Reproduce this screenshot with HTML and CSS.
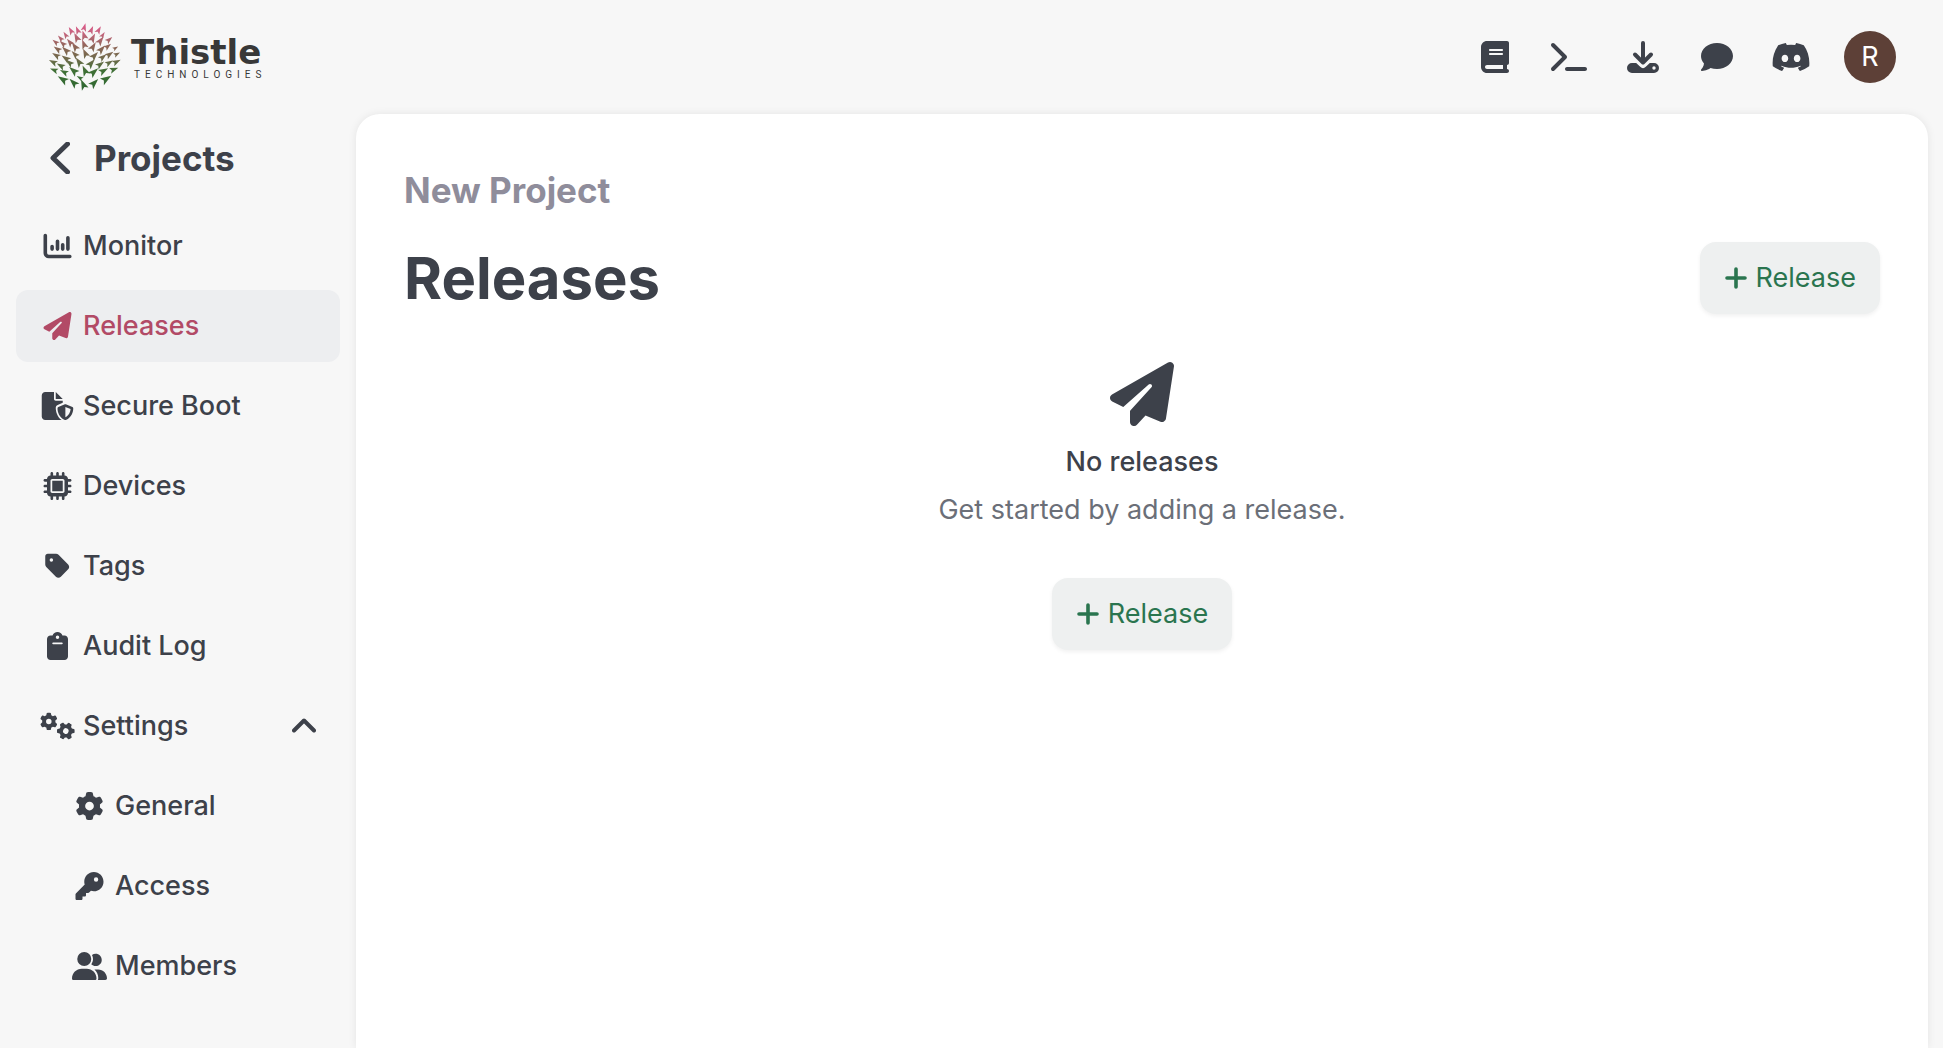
FILE: index.html
```html
<!DOCTYPE html>
<html lang="en">
  <head>
    <meta charset="UTF-8" />
    <meta name="viewport" content="width=device-width, initial-scale=1.0" />
    <title>Releases - Thistle</title>
    <link rel="stylesheet" href="styles.css">
  </head>
  <body>
    <!-- Shared icons -->
    <svg class="icon-defs" aria-hidden="true">
      <symbol id="icon-plane" viewBox="0 0 512 512">
        <path d="M498.1 5.6c10.1 7 15.4 19.1 13.5 31.2l-64 416c-1.5 9.7-7.4 18.2-16 23s-18.9 5.4-28 1.6L284 427.7l-68.5 74.1c-8.9 9.7-22.9 12.9-35.2 8.1S160 493.2 160 480V396.4c0-4 1.5-7.8 4.2-10.7L331.8 202.8c5.8-6.3 5.6-16-.4-22s-15.7-6.4-22-.7L106 360.8 17.7 316.6C7.1 311.3 .3 300.7 0 288.9s5.9-22.8 16.1-28.7l448-256c10.7-6.1 23.9-5.5 34 1.4z" />
      </symbol>
      <symbol id="icon-gear" viewBox="0 0 512 512">
        <path d="M495.9 166.6c3.2 8.7 .5 18.4-6.4 24.6l-43.3 39.4c1.1 8.3 1.7 16.8 1.7 25.4s-.6 17.1-1.7 25.4l43.3 39.4c6.9 6.2 9.6 15.9 6.4 24.6c-4.4 11.9-9.7 23.3-15.8 34.3l-4.7 8.1c-6.6 11-14 21.4-22.1 31.2c-5.9 7.2-15.7 9.6-24.5 6.8l-55.7-17.7c-13.4 10.3-28.2 18.9-44 25.4l-12.5 57.1c-2 9.1-9 16.3-18.2 17.8c-13.8 2.3-28 3.5-42.5 3.5s-28.7-1.2-42.5-3.5c-9.2-1.5-16.2-8.7-18.2-17.8l-12.5-57.1c-15.8-6.5-30.6-15.1-44-25.4L83.1 425.9c-8.8 2.8-18.6 .3-24.5-6.8c-8.1-9.8-15.5-20.2-22.1-31.2l-4.7-8.1c-6.1-11-11.4-22.4-15.8-34.3c-3.2-8.7-.5-18.4 6.4-24.6l43.3-39.4C64.6 273.1 64 264.6 64 256s.6-17.1 1.7-25.4L22.4 191.2c-6.9-6.2-9.6-15.9-6.4-24.6c4.4-11.9 9.7-23.3 15.8-34.3l4.7-8.1c6.6-11 14-21.4 22.1-31.2c5.9-7.2 15.7-9.6 24.5-6.8l55.7 17.7c13.4-10.3 28.2-18.9 44-25.4l12.5-57.1c2-9.1 9-16.3 18.2-17.8C227.3 1.2 241.5 0 256 0s28.7 1.2 42.5 3.5c9.2 1.5 16.2 8.7 18.2 17.8l12.5 57.1c15.8 6.5 30.6 15.1 44 25.4l55.7-17.7c8.8-2.8 18.6-.3 24.5 6.8c8.1 9.8 15.5 20.2 22.1 31.2l4.7 8.1c6.1 11 11.4 22.4 15.8 34.3zM256 336a80 80 0 1 0 0-160 80 80 0 1 0 0 160z" />
      </symbol>
      <symbol id="icon-plus" viewBox="0 0 24 24">
        <path d="M12 3v18M3 12h18" fill="none" stroke="currentColor" stroke-width="3.6" stroke-linecap="round" />
      </symbol>
    </svg>

    <header class="topbar">
      <a href="#" class="logo">
        <svg class="logo-mark" viewBox="50 35 222 210" aria-hidden="true">
          <defs>
            <linearGradient id="thistle-fill" x1="0" y1="0" x2="0" y2="1">
              <stop offset="0" stop-color="#e0538b" />
              <stop offset="0.15" stop-color="#c8647f" />
              <stop offset="0.35" stop-color="#8f6658" />
              <stop offset="0.55" stop-color="#6b6b49" />
              <stop offset="0.7" stop-color="#3f7036" />
              <stop offset="1" stop-color="#2c6630" />
            </linearGradient>
            <path id="dart-l" d="M-4-16 13 9 2 6-6 15z" />
            <path id="dart-r" d="M4-16-13 9-2 6 6 15z" />
            <clipPath id="thistle-darts">
              <use href="#dart-r" transform="translate(162 52) scale(.85)" />
              <use href="#dart-l" transform="translate(142 61) rotate(-8) scale(.85)" />
              <use href="#dart-l" transform="translate(122 62) rotate(-14) scale(.85)" />
              <use href="#dart-l" transform="translate(106 75) rotate(-18) scale(.75)" />
              <use href="#dart-l" transform="translate(91 85) rotate(-28) scale(.75)" />
              <use href="#dart-l" transform="translate(76 96) rotate(-36) scale(.75)" />
              <use href="#dart-r" transform="translate(183 60) rotate(8) scale(.85)" />
              <use href="#dart-r" transform="translate(205 60) rotate(14) scale(.85)" />
              <use href="#dart-r" transform="translate(217 75) rotate(18) scale(.7)" />
              <use href="#dart-r" transform="translate(236 89) rotate(34) scale(.8)" />
              <use href="#dart-r" transform="translate(255 114) rotate(44) scale(.6)" />

              <use href="#dart-l" transform="translate(161 76) rotate(-2)" />
              <use href="#dart-l" transform="translate(139 83) rotate(-12)" />
              <use href="#dart-l" transform="translate(119 97) rotate(-24) scale(.9)" />
              <use href="#dart-l" transform="translate(98 101) rotate(-34) scale(.8)" />
              <use href="#dart-l" transform="translate(82 117) rotate(-40) scale(.9)" />
              <use href="#dart-r" transform="translate(187 84) rotate(12)" />
              <use href="#dart-r" transform="translate(210 92) rotate(22)" />
              <use href="#dart-r" transform="translate(232 109) rotate(36) scale(.8)" />

              <use href="#dart-l" transform="translate(161 103) rotate(-6)" />
              <use href="#dart-l" transform="translate(134 110) rotate(-20)" />
              <use href="#dart-l" transform="translate(107 121) rotate(-32)" />
              <use href="#dart-l" transform="translate(78 136) rotate(-44) scale(.9)" />
              <use href="#dart-r" transform="translate(188 110) rotate(16)" />
              <use href="#dart-r" transform="translate(213 118) rotate(28)" />
              <use href="#dart-r" transform="translate(237 133) rotate(40) scale(.9)" />
              <use href="#dart-r" transform="translate(259 132) rotate(46) scale(.7)" />

              <use href="#dart-l" transform="translate(165 130) rotate(-10)" />
              <use href="#dart-l" transform="translate(134 133) rotate(-30) scale(.9)" />
              <use href="#dart-l" transform="translate(107 145) rotate(-40)" />
              <use href="#dart-l" transform="translate(69 156) rotate(-48) scale(.9)" />
              <use href="#dart-r" transform="translate(192 137) rotate(28)" />
              <use href="#dart-r" transform="translate(217 141) rotate(36) scale(.9)" />
              <use href="#dart-r" transform="translate(258 155) rotate(48) scale(.9)" />

              <use href="#dart-l" transform="translate(146 156) rotate(-20) scale(1.05)" />
              <use href="#dart-l" transform="translate(118 158) rotate(-34) scale(.9)" />
              <use href="#dart-l" transform="translate(92 167) rotate(-46) scale(.9)" />
              <use href="#dart-r" transform="translate(182 160) rotate(26) scale(1.05)" />
              <use href="#dart-r" transform="translate(209 163) rotate(38) scale(.95)" />
              <use href="#dart-r" transform="translate(236 158) rotate(44) scale(.85)" />

              <use href="#dart-l" transform="translate(164 182) rotate(-10) scale(1.1)" />
              <use href="#dart-l" transform="translate(130 182) rotate(-34) scale(1.1)" />
              <use href="#dart-l" transform="translate(102 186) rotate(-48) scale(.9)" />
              <use href="#dart-l" transform="translate(72 180) rotate(-54) scale(.85)" />
              <use href="#dart-r" transform="translate(190 186) rotate(34) scale(1.1)" />
              <use href="#dart-r" transform="translate(219 182) rotate(46)" />
              <use href="#dart-r" transform="translate(250 178) rotate(54) scale(.9)" />

              <use href="#dart-l" transform="translate(98 208) rotate(-42) scale(1.15)" />
              <use href="#dart-l" transform="translate(130 218) rotate(-30) scale(1.1)" />
              <use href="#dart-l" transform="translate(159 224) rotate(-8) scale(1.1)" />
              <use href="#dart-l" transform="translate(149 203) rotate(-44) scale(.7)" />
              <use href="#dart-r" transform="translate(191 219) rotate(30) scale(1.1)" />
              <use href="#dart-r" transform="translate(227 207) rotate(42) scale(1.15)" />
            </clipPath>
          </defs>
          <rect x="50" y="35" width="222" height="210" fill="url(#thistle-fill)" clip-path="url(#thistle-darts)" />
        </svg>
        <span class="logo-text">
          <span class="logo-name">Thistle</span>
          <span class="logo-sub">TECHNOLOGIES</span>
        </span>
      </a>

      <nav class="toolbar" aria-label="Resources">
        <a href="#" class="tool" aria-label="Documentation">
          <svg viewBox="0 0 448 512"><path d="M96 0C43 0 0 43 0 96V416c0 53 43 96 96 96H384h32c17.7 0 32-14.3 32-32s-14.3-32-32-32V384c17.7 0 32-14.3 32-32V32c0-17.7-14.3-32-32-32H384 96zm0 384H352v64H96c-17.7 0-32-14.3-32-32s14.3-32 32-32zm32-240c0-8.8 7.2-16 16-16H336c8.8 0 16 7.2 16 16s-7.2 16-16 16H144c-8.8 0-16-7.2-16-16zm16 48H336c8.8 0 16 7.2 16 16s-7.2 16-16 16H144c-8.8 0-16-7.2-16-16s7.2-16 16-16z" /></svg>
        </a>
        <a href="#" class="tool" aria-label="Terminal">
          <svg viewBox="0 0 576 512"><path d="M9.4 86.6C-3.1 74.1-3.1 53.9 9.4 41.4s32.8-12.5 45.3 0l192 192c12.5 12.5 12.5 32.8 0 45.3l-192 192c-12.5 12.5-32.8 12.5-45.3 0s-12.5-32.8 0-45.3L178.7 256 9.4 86.6zM256 416H544c17.7 0 32 14.3 32 32s-14.3 32-32 32H256c-17.7 0-32-14.3-32-32s14.3-32 32-32z" /></svg>
        </a>
        <a href="#" class="tool" aria-label="Downloads">
          <svg viewBox="0 0 32 32">
            <path d="M16 2v19M8 13.5l8 8 8-8" fill="none" stroke="currentColor" stroke-width="4" stroke-linecap="round" stroke-linejoin="round" />
            <path fill-rule="evenodd" d="M5 22h4.2l4 3.8a4 4 0 0 0 5.6 0l4-3.8H27a5 5 0 0 1 0 10H5a5 5 0 0 1 0-10zm22 3.3a1.7 1.7 0 1 0 0 3.4 1.7 1.7 0 0 0 0-3.4z" />
          </svg>
        </a>
        <a href="#" class="tool" aria-label="Support chat">
          <svg viewBox="0 0 512 512"><path d="M512 240c0 114.9-114.6 208-256 208c-37.1 0-72.3-6.4-104.1-17.9c-11.9 8.7-31.3 20.6-54.3 30.6C73.6 471.1 44.7 480 16 480c-6.5 0-12.3-3.9-14.8-9.9c-2.5-6-1.1-12.8 3.4-17.4l.3-.3c.3-.3 .7-.7 1.3-1.4c1.1-1.2 2.8-3.1 4.9-5.7c4.1-5 9.6-12.4 15.2-21.6c10-16.6 19.5-38.4 21.4-62.9C17.7 326.8 0 285.1 0 240C0 125.1 114.6 32 256 32s256 93.1 256 208z" /></svg>
        </a>
        <a href="#" class="tool" aria-label="Discord">
          <svg viewBox="0 0 640 512"><path d="M524.531,69.836a1.5,1.5,0,0,0-.764-.7A485.065,485.065,0,0,0,404.081,32.03a1.816,1.816,0,0,0-1.923.91,337.461,337.461,0,0,0-14.9,30.6,447.848,447.848,0,0,0-134.426,0,309.541,309.541,0,0,0-15.135-30.6,1.89,1.89,0,0,0-1.924-.91A483.689,483.689,0,0,0,116.085,69.137a1.712,1.712,0,0,0-.788.676C39.068,183.651,18.186,294.69,28.43,404.354a2.016,2.016,0,0,0,.765,1.375A487.666,487.666,0,0,0,176.02,479.918a1.9,1.9,0,0,0,2.063-.676A348.2,348.2,0,0,0,208.12,430.4a1.86,1.86,0,0,0-1.019-2.588,321.173,321.173,0,0,1-45.868-21.853,1.885,1.885,0,0,1-.185-3.126c3.082-2.309,6.166-4.711,9.109-7.137a1.819,1.819,0,0,1,1.9-.256c96.229,43.917,200.41,43.917,295.5,0a1.812,1.812,0,0,1,1.924.233c2.944,2.426,6.027,4.851,9.132,7.16a1.884,1.884,0,0,1-.162,3.126,301.407,301.407,0,0,1-45.89,21.83,1.875,1.875,0,0,0-1,2.611,391.055,391.055,0,0,0,30.014,48.815,1.864,1.864,0,0,0,2.063.7A486.048,486.048,0,0,0,610.7,405.729a1.882,1.882,0,0,0,.765-1.352C623.729,277.594,590.933,167.465,524.531,69.836ZM222.491,337.58c-28.972,0-52.844-26.587-52.844-59.239S193.056,219.1,222.491,219.1c29.665,0,53.306,26.82,52.843,59.239C275.334,310.993,251.924,337.58,222.491,337.58Zm195.38,0c-28.971,0-52.843-26.587-52.843-59.239S388.437,219.1,417.871,219.1c29.667,0,53.307,26.82,52.844,59.239C470.715,310.993,447.538,337.58,417.871,337.58Z" /></svg>
        </a>
        <button type="button" class="avatar">R</button>
      </nav>
    </header>

    <div class="layout">
      <aside class="sidebar">
        <a href="#" class="back-link">
          <svg class="back-icon" viewBox="0 0 20 32" aria-hidden="true"><path d="M17.5 2 3 16l14.5 14" /></svg>
          Projects
        </a>

        <nav class="menu" aria-label="Project">
          <a href="#" class="menu-item">
            <svg class="menu-icon" viewBox="0 0 28 28"><path d="M1.8 3.5V21a3.5 3.5 0 0 0 3.5 3.5h21M8.6 14.5v2.6M14 9.3v7.8M19.2 12.8v4.3M24.4 5.8v11.3" fill="none" stroke="currentColor" stroke-width="3.6" stroke-linecap="round" /></svg>
            Monitor
          </a>
          <a href="#" class="menu-item active" aria-current="page">
            <svg class="menu-icon"><use href="#icon-plane" /></svg>
            Releases
          </a>
          <a href="#" class="menu-item">
            <svg class="menu-icon" viewBox="0 0 576 512"><path d="M0 64C0 28.7 28.7 0 64 0H224V128c0 17.7 14.3 32 32 32H384v38.6l-92.9 37.2c-21.2 8.5-35.1 29-35.1 51.8c0 57.8 20.5 166 108 224.4H64c-35.3 0-64-28.7-64-64V64zm384 64H256V0L384 128zm39.1 97.7c5.7-2.3 12.1-2.3 17.8 0l120 48C570 277.4 576 286.2 576 296c0 63.3-25.9 168.8-134.8 214.2c-5.9 2.5-12.6 2.5-18.5 0C313.9 464.8 288 359.3 288 296c0-9.8 6-18.6 15.1-22.3l120-48zM527.4 312L432 273.8V461.7c68.2-33 91.5-99 95.4-149.7z" /></svg>
            Secure Boot
          </a>
          <a href="#" class="menu-item">
            <svg class="menu-icon" viewBox="0 0 512 512"><path d="M176 24c0-13.3-10.7-24-24-24s-24 10.7-24 24V64c-35.3 0-64 28.7-64 64H24c-13.3 0-24 10.7-24 24s10.7 24 24 24H64v56H24c-13.3 0-24 10.7-24 24s10.7 24 24 24H64v56H24c-13.3 0-24 10.7-24 24s10.7 24 24 24H64c0 35.3 28.7 64 64 64v40c0 13.3 10.7 24 24 24s24-10.7 24-24V448h56v40c0 13.3 10.7 24 24 24s24-10.7 24-24V448h56v40c0 13.3 10.7 24 24 24s24-10.7 24-24V448c35.3 0 64-28.7 64-64h40c13.3 0 24-10.7 24-24s-10.7-24-24-24H448V280h40c13.3 0 24-10.7 24-24s-10.7-24-24-24H448V176h40c13.3 0 24-10.7 24-24s-10.7-24-24-24H448c0-35.3-28.7-64-64-64V24c0-13.3-10.7-24-24-24s-24 10.7-24 24V64H280V24c0-13.3-10.7-24-24-24s-24 10.7-24 24V64H176V24zM160 128H352c17.7 0 32 14.3 32 32V352c0 17.7-14.3 32-32 32H160c-17.7 0-32-14.3-32-32V160c0-17.7 14.3-32 32-32zm192 32H160V352H352V160z" /></svg>
            Devices
          </a>
          <a href="#" class="menu-item">
            <svg class="menu-icon" viewBox="0 0 448 512"><path d="M0 80V229.5c0 17 6.7 33.3 18.7 45.3l176 176c25 25 65.5 25 90.5 0L418.7 317.3c25-25 25-65.5 0-90.5l-176-176c-12-12-28.3-18.7-45.3-18.7H48C21.5 32 0 53.5 0 80zm112 32a32 32 0 1 1 0 64 32 32 0 1 1 0-64z" /></svg>
            Tags
          </a>
          <a href="#" class="menu-item">
            <svg class="menu-icon" viewBox="0 0 384 512"><path d="M192 0c-41.8 0-77.4 26.7-90.5 64H64C28.7 64 0 92.7 0 128V448c0 35.3 28.7 64 64 64H320c35.3 0 64-28.7 64-64V128c0-35.3-28.7-64-64-64H282.5C269.4 26.7 233.8 0 192 0zm0 64a32 32 0 1 1 0 64 32 32 0 1 1 0-64zM112 192H272c8.8 0 16 7.2 16 16s-7.2 16-16 16H112c-8.8 0-16-7.2-16-16s7.2-16 16-16z" /></svg>
            Audit Log
          </a>
          <button type="button" class="menu-item" aria-expanded="true">
            <svg class="menu-icon" viewBox="0 0 35 28">
              <use href="#icon-gear" x="0" y="0.6" width="17.6" height="17.6" />
              <use href="#icon-gear" x="17" y="10.2" width="17.6" height="17.6" transform="rotate(30 25.8 19)" />
            </svg>
            Settings
            <svg class="menu-chevron" viewBox="0 0 24 16"><path d="M2 12.5 12 2.5l10 10" /></svg>
          </button>
          <div class="submenu">
            <a href="#" class="menu-item">
              <svg class="menu-icon"><use href="#icon-gear" /></svg>
              General
            </a>
            <a href="#" class="menu-item">
              <svg class="menu-icon" viewBox="0 0 512 512"><path d="M336 352c97.2 0 176-78.8 176-176S433.2 0 336 0S160 78.8 160 176c0 18.7 2.9 36.8 8.3 53.7L7 391c-4.5 4.5-7 10.6-7 17v80c0 13.3 10.7 24 24 24h80c13.3 0 24-10.7 24-24V448h40c13.3 0 24-10.7 24-24V384h40c6.4 0 12.5-2.5 17-7l33.3-33.3c16.9 5.4 35 8.3 53.7 8.3zM376 96a40 40 0 1 1 0 80 40 40 0 1 1 0-80z" /></svg>
              Access
            </a>
            <a href="#" class="menu-item">
              <svg class="menu-icon" viewBox="0 0 640 512"><path d="M96 128a128 128 0 1 1 256 0A128 128 0 1 1 96 128zM0 482.3C0 383.8 79.8 304 178.3 304h91.4C368.2 304 448 383.8 448 482.3c0 16.4-13.3 29.7-29.7 29.7H29.7C13.3 512 0 498.7 0 482.3zM609.3 512H471.4c5.4-9.4 8.6-20.3 8.6-32v-8c0-60.7-27.1-115.2-69.8-151.8c2.4-.1 4.7-.2 7.1-.2h61.4C567.8 320 640 392.2 640 481.3c0 17-13.8 30.7-30.7 30.7zM432 256c-31 0-59-12.6-79.3-32.9C372.4 196.5 384 163.6 384 128c0-26.8-6.6-52.1-18.3-74.3C384.3 40.1 407.2 32 432 32c61.9 0 112 50.1 112 112s-50.1 112-112 112z" /></svg>
              Members
            </a>
          </div>
        </nav>
      </aside>

      <main class="content">
        <p class="project-name">New Project</p>
        <div class="page-header">
          <h1>Releases</h1>
          <button type="button" class="btn">
            <svg class="btn-icon"><use href="#icon-plus" /></svg>
            Release
          </button>
        </div>

        <section class="empty">
          <svg class="empty-icon"><use href="#icon-plane" /></svg>
          <h2>No releases</h2>
          <p>Get started by adding a release.</p>
          <button type="button" class="btn">
            <svg class="btn-icon"><use href="#icon-plus" /></svg>
            Release
          </button>
        </section>
      </main>
    </div>
  </body>
</html>
```

FILE: styles.css
```css
* {
  margin: 0;
  padding: 0;
  box-sizing: border-box;
}

body {
  display: flex;
  flex-direction: column;
  min-height: 100vh;
  background-color: #f7f7f7;
  color: #3d414a;
  font-family: Inter, "Open Sans", sans-serif;
  font-size: 27px;
  line-height: 40px;
}

a {
  color: inherit;
  text-decoration: none;
}

button {
  border: none;
  background: none;
  color: inherit;
  font: inherit;
  cursor: pointer;
}

svg {
  fill: currentColor;
  flex-shrink: 0;
}

.icon-defs {
  display: none;
}

/* Top bar */
.topbar {
  display: flex;
  align-items: center;
  justify-content: space-between;
  height: 114px;
  padding: 0 47px;
}

.logo {
  display: flex;
  align-items: center;
  gap: 10px;
  color: #383838;
}

.logo-mark {
  width: 74px;
  height: 70px;
}

.logo-text {
  display: flex;
  flex-direction: column;
}

.logo-name {
  font-family: "DejaVu Sans", sans-serif;
  font-size: 34px;
  font-weight: 700;
  line-height: 36px;
}

.logo-sub {
  padding-left: 3px;
  font-family: "Liberation Sans Narrow", Roboto, sans-serif;
  font-size: 10px;
  line-height: 10px;
  letter-spacing: 5px;
}

.toolbar {
  display: flex;
  align-items: center;
  gap: 32px;
}

.tool {
  display: flex;
  justify-content: center;
  width: 42px;
}

.tool svg {
  height: 32px;
}

.avatar {
  width: 52px;
  height: 52px;
  border-radius: 50%;
  background-color: #5d4037;
  color: white;
}

/* Sidebar */
.layout {
  display: flex;
  flex: 1;
}

.sidebar {
  width: 356px;
  padding: 16px 16px 0;
}

.back-link {
  display: flex;
  align-items: center;
  gap: 24px;
  height: 56px;
  margin-bottom: 24px;
  padding-left: 34px;
  font-size: 35px;
  font-weight: 700;
}

.back-icon {
  width: 20px;
  height: 32px;
}

.back-icon path,
.menu-chevron path {
  fill: none;
  stroke: currentColor;
  stroke-width: 4;
  stroke-linecap: round;
  stroke-linejoin: round;
}

.back-icon path {
  stroke-width: 5;
}

.menu,
.submenu {
  display: flex;
  flex-direction: column;
  gap: 8px;
}

.submenu {
  padding-left: 32px;
}

.menu-item {
  display: flex;
  align-items: center;
  gap: 8px;
  height: 72px;
  padding: 0 24px;
  border-radius: 12px;
  font-weight: 500;
}

.menu-item:hover,
.menu-item.active {
  background-color: #edeef0;
}

.menu-item.active {
  color: #b24a66;
}

.menu-icon {
  width: 35px;
  height: 28px;
}

.menu-chevron {
  width: 24px;
  height: 16px;
  margin-left: auto;
}

/* Main card */
.content {
  flex: 1;
  margin-right: 15px;
  padding: 48px;
  border-radius: 24px 24px 0 0;
  background-color: white;
  box-shadow: 0 0 8px rgba(0, 0, 0, 0.08);
}

.project-name {
  margin-bottom: 24px;
  color: #8f8d9b;
  font-size: 35px;
  font-weight: 700;
  line-height: 56px;
}

.page-header {
  display: flex;
  align-items: center;
  justify-content: space-between;
}

.page-header h1 {
  font-size: 58px;
  font-weight: 700;
  line-height: 72px;
}

.btn {
  display: flex;
  align-items: center;
  gap: 8px;
  height: 72px;
  padding: 0 24px;
  border-radius: 16px;
  background-color: #eef0f0;
  box-shadow: 0 2px 4px rgba(0, 0, 0, 0.06);
  color: #2a754f;
}

.btn:hover {
  background-color: #e4e8e7;
}

.btn-icon {
  width: 24px;
  height: 24px;
}

/* Empty state */
.empty {
  display: flex;
  flex-direction: column;
  align-items: center;
  padding-top: 48px;
}

.empty-icon {
  width: 64px;
  height: 64px;
  margin-bottom: 16px;
}

.empty h2 {
  margin-bottom: 8px;
  font-size: 27px;
  font-weight: 500;
}

.empty p {
  margin-bottom: 48px;
  color: #6b6f78;
}
```
